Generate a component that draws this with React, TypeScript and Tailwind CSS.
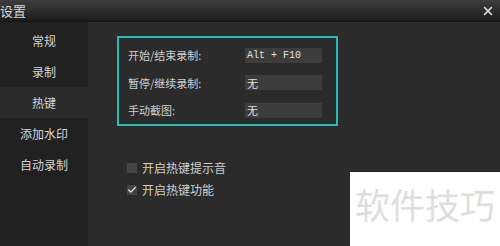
import { Check, X } from "lucide-react";

const navItems = ["常规", "录制", "热键", "添加水印", "自动录制"];

const hotkeys = [
  { label: "开始/结束录制:", value: "Alt + F10", mono: true },
  { label: "暂停/继续录制:", value: "无", mono: false },
  { label: "手动截图:", value: "无", mono: false },
];

const cjk = "font-['Noto_Sans_CJK_SC','Noto_Sans',sans-serif]";

const App = () => {
  return (
    <div className={`relative w-[500px] h-[246px] overflow-hidden bg-[#2b2b2b] ${cjk}`}>
      <div className="h-[22px] flex items-center justify-between bg-gradient-to-b from-[#3e3e3e] to-[#1c1c1c] border-b border-[#161616]">
        <span className="text-[13px] leading-none text-[#d8d8d8]">设置</span>
        <X className="w-[14px] h-[14px] mr-[5px] text-[#e6e6e6]" strokeWidth={2.5} />
      </div>

      <div className="flex h-[224px]">
        <div className="w-[88px] bg-[#212121] pt-[3px] flex flex-col">
          {navItems.map((item) => (
            <div
              key={item}
              className={`h-[31px] flex items-center justify-center text-[12px] text-[#d4d4d4] ${
                item === "热键" ? "bg-[#2b2b2b]" : ""
              }`}
            >
              {item}
            </div>
          ))}
        </div>

        <div className="flex-1 pl-[29px] pt-[14px]">
          <div className="w-[221px] h-[90px] border-2 border-[#29bab6] pl-[9px] pt-[4px] flex flex-col">
            {hotkeys.map((h) => (
              <div key={h.label} className="h-[28px] flex items-center">
                <span className="w-[117px] text-[11px] text-[#cfcfcf]">{h.label}</span>
                <div
                  className={`w-[77px] h-[15px] bg-[#3d3d3d] flex items-center pl-[2px] text-[#e0e0e0] ${
                    h.mono ? "font-['Liberation_Mono',monospace] text-[10px]" : "text-[11px]"
                  }`}
                >
                  {h.value}
                </div>
              </div>
            ))}
          </div>

          <div className="mt-[36px] flex flex-col gap-[11px] pl-[10px]">
            <label className="flex items-center gap-[5px] text-[12px] text-[#cfcfcf] h-[11px]">
              <span className="w-[10px] h-[10px] bg-[#454545]" />
              开启热键提示音
            </label>
            <label className="flex items-center gap-[5px] text-[12px] text-[#cfcfcf] h-[11px]">
              <span className="w-[10px] h-[10px] bg-[#454545] flex items-center justify-center">
                <Check className="w-[10px] h-[10px] text-[#e8e8e8]" strokeWidth={3} />
              </span>
              开启热键功能
            </label>
          </div>
        </div>
      </div>

      <div className="absolute left-[350px] top-[172px] w-[150px] h-[74px] bg-white flex items-start pt-[14px] pl-[5px]">
        <span className="text-[35px] leading-none text-[#dedede]">软件技巧</span>
      </div>
    </div>
  );
};

export default App;
